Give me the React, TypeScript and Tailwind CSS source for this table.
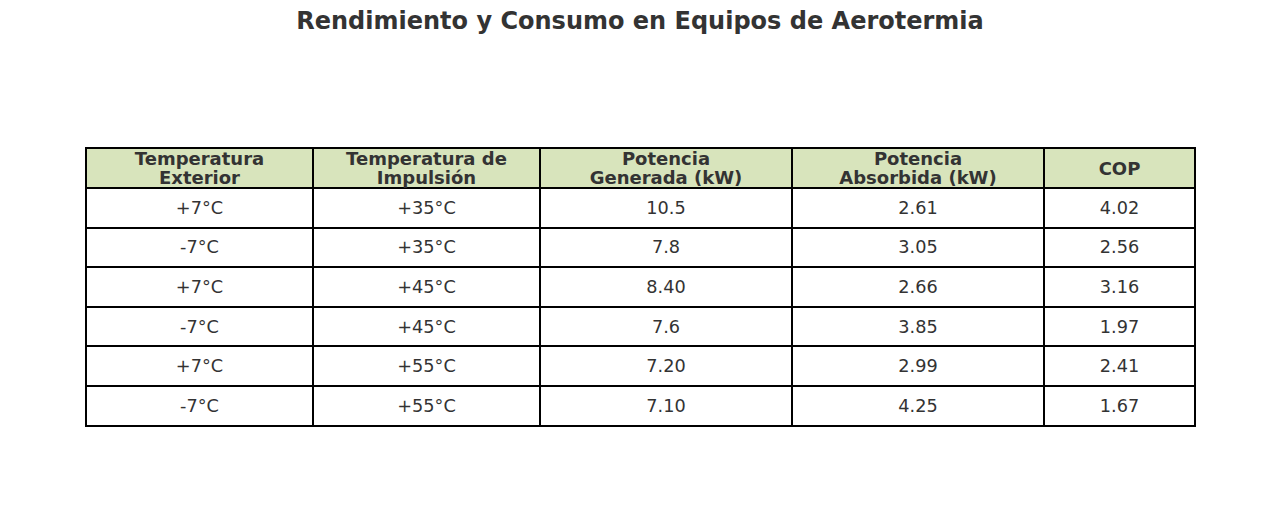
import React from 'react';

const headers = [
['Temperatura', 'Exterior'],
['Temperatura de', 'Impulsión'],
['Potencia', 'Generada (kW)'],
['Potencia', 'Absorbida (kW)'],
['COP']];

const widths = ['w-[227px]', 'w-[227px]', 'w-[252px]', 'w-[252px]', 'w-[151px]'];

const rows = [
['+7°C', '+35°C', '10.5', '2.61', '4.02'],
['-7°C', '+35°C', '7.8', '3.05', '2.56'],
['+7°C', '+45°C', '8.40', '2.66', '3.16'],
['-7°C', '+45°C', '7.6', '3.85', '1.97'],
['+7°C', '+55°C', '7.20', '2.99', '2.41'],
['-7°C', '+55°C', '7.10', '4.25', '1.67']];

export default function App() {
  return (
    <div className="w-[1280px] h-[527px] bg-white text-[#333333] font-['DejaVu_Sans',sans-serif]">
      <h1 className="pt-[5px] text-center text-[24px] leading-[32px] font-bold">
        Rendimiento y Consumo en Equipos de Aerotermia
      </h1>

      <div className="mt-[110px] pl-[85px]">
        <table className="table-fixed border-collapse">
          <thead>
            <tr className="h-[40px] bg-[#d8e4bc]">
              {headers.map((h, i) =>
              <th
                key={i}
                className={`${widths[i]} border-2 border-black p-0 text-center text-[18px] leading-[19px] font-bold`}>
                  {h.map((line, j) =>
                <div key={j}>{line}</div>
                )}
                </th>
              )}
            </tr>
          </thead>
          <tbody>
            {rows.map((r, i) =>
            <tr key={i} className="h-[39.6px]">
                {r.map((c, j) =>
              <td
                key={j}
                className="border-2 border-black p-0 text-center text-[17.7px] leading-[20px]">
                    {c}
                  </td>
              )}
              </tr>
            )}
          </tbody>
        </table>
      </div>
    </div>);

}
